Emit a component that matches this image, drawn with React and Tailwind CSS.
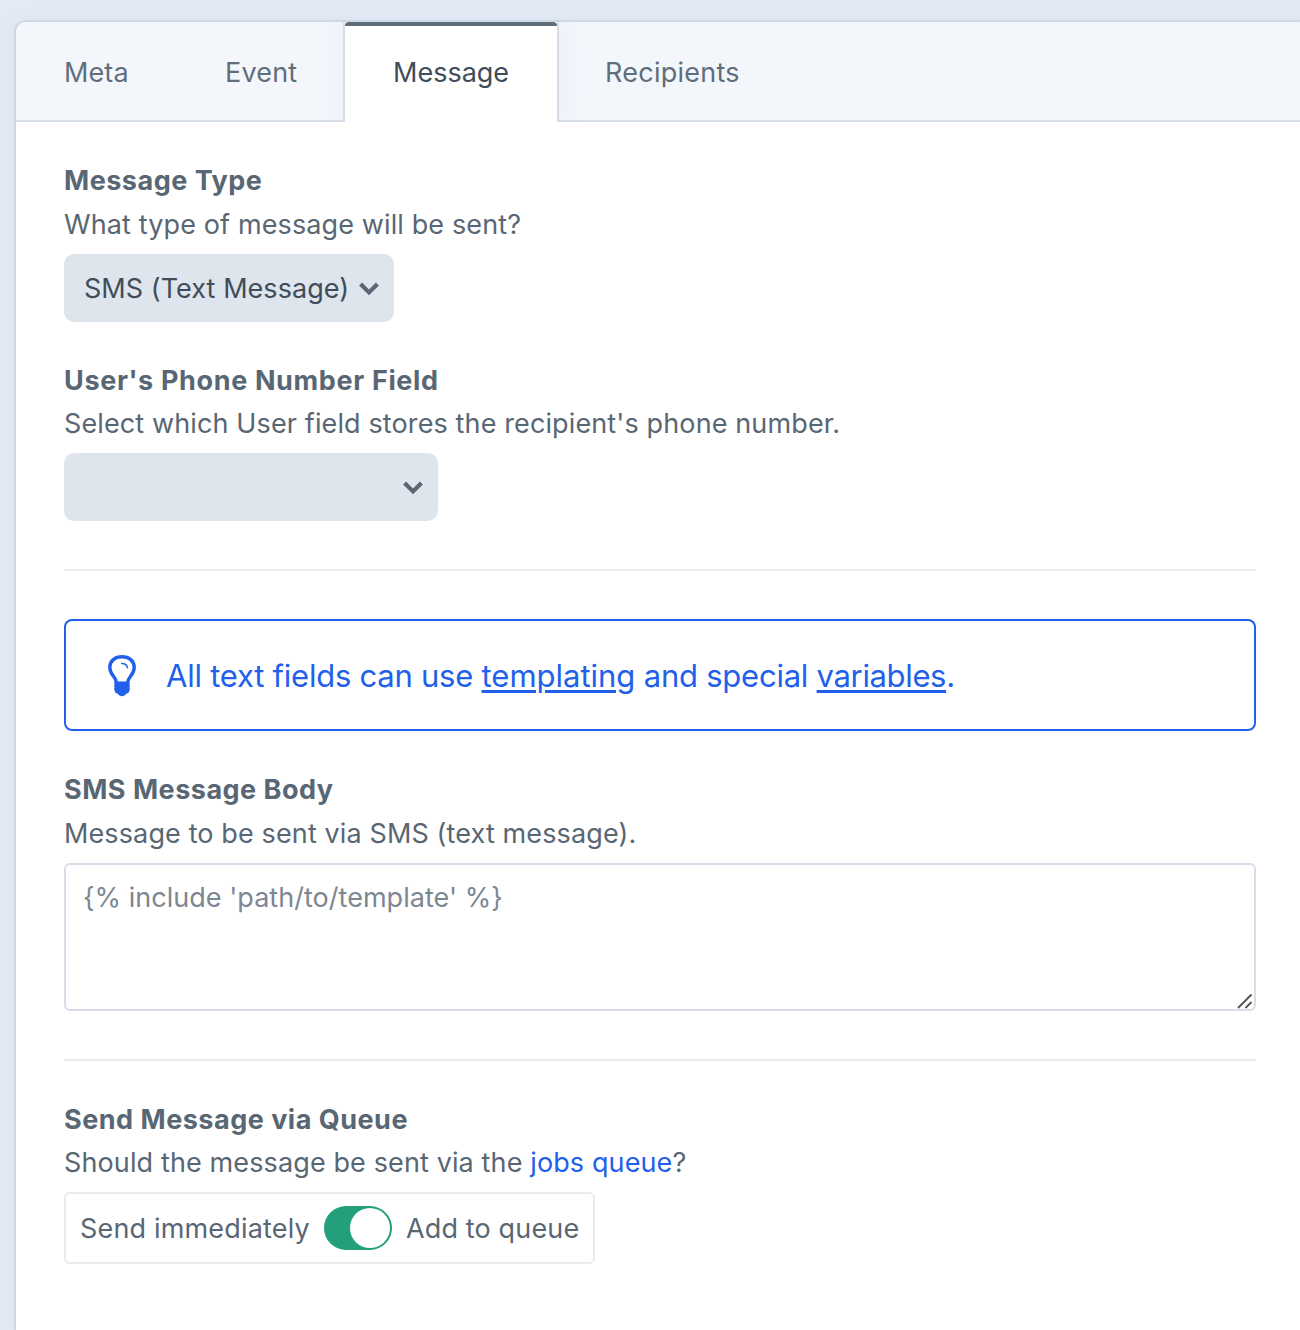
function Chevron() {
  return (
    <svg width="20" height="14" viewBox="0 0 20 14" className="shrink-0">
      <path d="M1.6 2 L10 10.4 L18.4 2" fill="none" stroke="#596673" strokeWidth="4.2" />
    </svg>
  );
}

function Bulb() {
  return (
    <svg width="28" height="42" viewBox="0 0 28 42" className="shrink-0">
      <path
        d="M8.6 28 C8.2 22 1.8 20 1.8 12.4 C1.8 5.8 7 1.8 14 1.8 C21 1.8 26.2 5.8 26.2 12.4 C26.2 20 19.8 22 19.4 28"
        fill="none"
        stroke="currentColor"
        strokeWidth="3.4"
      />
      <path d="M13.6 8.4 C17 8.4 19.2 9.8 19.4 12.8" fill="none" stroke="currentColor" strokeWidth="1.5" strokeLinecap="round" />
      <path
        d="M7 26.6 H21 C22 27.8 21.9 28.8 21.4 29.6 C22 30.6 22 31.6 21.4 32.4 C22 33.4 22 34.4 21.4 35.4 C21.4 37 20.4 38 18.4 38.6 C17.4 40.4 15.6 41.2 14 41.2 C12.4 41.2 10.6 40.4 9.6 38.6 C7.6 38 6.6 37 6.6 35.4 C6 34.4 6 33.4 6.6 32.4 C6 31.6 6 30.6 6.6 29.6 C6.1 28.8 6 27.8 7 26.6 Z"
        fill="currentColor"
      />
    </svg>
  );
}

function Heading({ title, titleClass = 'tracking-[0.5px]', textClass = 'mt-1', children }) {
  return (
    <>
      <h2 className={`h-10 font-bold leading-10 ${titleClass}`}>{title}</h2>
      <p className={`h-10 leading-10 tracking-[0.12px] ${textClass}`}>{children}</p>
    </>
  );
}

export default function App() {
  return (
    <div className="flex h-[1330px] w-[1300px] overflow-hidden bg-[#e4ebf5] pl-3.5 pt-5 font-['Inter',sans-serif] text-[27px] text-[#596673]">
      <main className="w-[1310px] shrink-0 rounded-tl-[12px] border-l-2 border-t-2 border-[#cdd8e4] bg-white shadow-[0_0_24px_rgba(205,216,228,0.4)]">
        <nav className="flex h-[100px] overflow-hidden rounded-tl-[10px] bg-[#f3f7fc] leading-[102px] text-[#606d7b] shadow-[inset_0_-2px_0_#d8dee7]">
          <a className="w-[161px] pl-12 tracking-[0.1px]">Meta</a>
          <a className="w-[166px] pl-12 tracking-[0.2px]">Event</a>
          <div className="w-[216px] border-x-2 border-[#d5dde8] bg-white text-[#3f4d5a] shadow-[0_0_24px_rgba(205,216,232,0.3)]">
            <div className="h-full rounded-t-[4px] border-t-4 border-[#606d7b] pl-12 leading-[94px]">Message</div>
          </div>
          <a className="pl-[46px] tracking-[0.25px]">Recipients</a>
        </nav>

        <div className="w-[1240px] px-12 pt-[39px]">
          <section>
            <Heading title="Message Type">What type of message will be sent?</Heading>
            <div className="mt-[9px] flex h-[68px] w-[330px] items-center justify-between rounded-[10px] bg-[#dee5ed] pl-5 pr-[15px] pt-0.5 text-[#3f4d5a]">
              <span className="tracking-[0.05px]">SMS (Text Message)</span>
              <Chevron />
            </div>
          </section>

          <section className="mt-[39px]">
            <Heading title="User's Phone Number Field" titleClass="tracking-[0.64px]" textClass="mt-[3px]">
              Select which User field stores the recipient's phone number.
            </Heading>
            <div className="mt-[9px] flex h-[68px] w-[374px] items-center justify-end rounded-[10px] bg-[#dee5ed] pr-[15px] pt-0.5">
              <Chevron />
            </div>
          </section>

          <hr className="mt-12 w-[1192px] border-t-2 border-[#e8ebee]" />

          <div className="mt-12 flex h-28 w-[1192px] items-center rounded-lg border-2 border-[#2160ea] pl-[42px] pt-0.5 text-[31px] text-[#2160ea]">
            <Bulb />
            <p className="ml-[30px] whitespace-pre tracking-[-0.24px]">
              All text fields can use{' '}
              <a className="tracking-[-0.02px] underline decoration-[3px] underline-offset-[3px]">templating</a> and special{' '}
              <a className="tracking-[-0.35px] underline decoration-[3px] underline-offset-[3px]">variables</a>.
            </p>
          </div>

          <section className="mt-[39px]">
            <Heading title="SMS Message Body">Message to be sent via SMS (text message).</Heading>
            <div className="mt-[9px] flex h-[148px] w-[1192px] rounded-[6px] border-2 border-[#d8dde9] pl-[17px] pt-[13px] leading-10 text-[#7d8792]">
              <span className="flex-1 tracking-[0.03px]">{"{% include 'path/to/template' %}"}</span>
              <svg width="16" height="16" viewBox="0 0 16 16" className="mr-px self-end">
                <path d="M1 15 L14.5 1.5 M8.5 15 L14.5 9" stroke="#555" strokeWidth="1.9" fill="none" />
              </svg>
            </div>
          </section>

          <hr className="mt-12 w-[1192px] border-t-2 border-[#e9ebed]" />

          <section className="mt-[39px]">
            <Heading title="Send Message via Queue" textClass="mt-[3px]">
              Should the message be sent via the <a className="text-[#2160ea]">jobs queue</a>?
            </Heading>
            <div className="mt-[9px] flex h-[72px] w-[531px] items-center rounded-[6px] border-2 border-[#ebebeb] pl-[14px]">
              <span className="w-[244px] pt-0.5 tracking-[0.17px]">Send immediately</span>
              <div className="flex h-11 w-[68px] items-center justify-end rounded-full bg-[#23a07b] p-0.5">
                <div className="size-10 rounded-full bg-white" />
              </div>
              <span className="pl-3.5 pt-0.5 tracking-[0.14px]">Add to queue</span>
            </div>
          </section>
        </div>
      </main>
    </div>
  );
}
